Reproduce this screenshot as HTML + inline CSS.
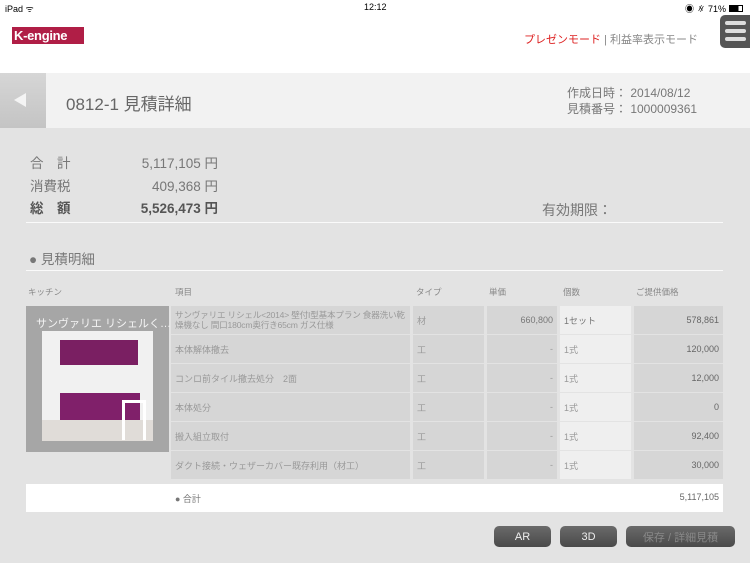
<!DOCTYPE html>
<html><head><meta charset="utf-8"><style>
*{margin:0;padding:0;box-sizing:border-box}
body{width:750px;height:563px;background:#e3e3e3;font-family:"Liberation Sans","Noto Sans CJK JP",sans-serif;position:relative;overflow:hidden;color:#666}
.a{position:absolute;white-space:nowrap}
.top{position:absolute;left:0;top:0;width:750px;height:73px;background:#fff}
.hd{position:absolute;left:0;top:73px;width:750px;height:55px;background:#f2f2f2}
.back{position:absolute;left:0;top:73px;width:46px;height:55px;background:linear-gradient(#d6d6d6,#c4c4c4)}
.c{position:absolute;background:#d6d6d6;font-size:9px;color:#999;padding:0 4px;display:flex;align-items:center}
.q{background:#efefef}
.btn{position:absolute;top:526px;height:21px;border-radius:5px;background:linear-gradient(#6a6a6a,#4a4a4a);color:#eee;font-size:11px;display:flex;align-items:center;justify-content:center}
</style></head><body>
<div class="top"></div>
<div class="a" style="left:5px;top:2px;font-size:9px;color:#000">iPad ᯤ</div>
<div class="a" style="left:364px;top:2px;font-size:9px;color:#000">12:12</div>
<div class="a" style="left:685px;top:2px;font-size:9px;color:#000">◉ ∦ 71% <span style="display:inline-block;width:14px;height:7px;border:1px solid #000;background:linear-gradient(90deg,#000 70%,#fff 70%)"></span></div>
<div class="a" style="left:12px;top:27px;width:72px;height:17px;background:#b01e46;color:#fff;font-size:13px;font-weight:bold;line-height:17px;padding-left:2px;letter-spacing:-0.3px">K-engine</div>
<div class="a" style="left:524px;top:31px;font-size:11px;color:#d22"><span>プレゼンモード</span> <span style="color:#888">| 利益率表示モード</span></div>
<div class="a" style="left:720px;top:15px;width:30px;height:33px;background:#555;border-radius:5px 0 0 5px"></div>
<div class="a" style="left:725px;top:21px;width:21px;height:4px;background:#ddd;border-radius:2px;box-shadow:0 8px 0 #ddd,0 16px 0 #ddd"></div>
<div class="hd"></div><div class="back"></div>
<div class="a" style="left:14px;top:93px;width:0;height:0;border-top:7px solid transparent;border-bottom:7px solid transparent;border-right:12px solid #f4f4f4"></div>
<div class="a" style="left:66px;top:90px;font-size:17px;color:#666">0812-1 見積詳細</div>
<div class="a" style="left:567px;top:85px;font-size:12px;color:#777;line-height:16px">作成日時： 2014/08/12<br>見積番号： 1000009361</div>
<div class="a" style="left:30px;top:153px;font-size:13.5px;line-height:22.5px;color:#777">合　計<br>消費税<br><b style="color:#555">総　額</b></div>
<div class="a" style="left:100px;top:153px;width:118px;text-align:right;font-size:13.5px;line-height:22.5px;color:#777">5,117,105 円<br>409,368 円<br><b style="color:#555">5,526,473 円</b></div>
<div class="a" style="left:542px;top:200px;font-size:14px;color:#777">有効期限：</div>
<div class="a" style="left:26px;top:222px;width:697px;height:1px;background:#fafafa"></div>
<div class="a" style="left:29px;top:248px;font-size:13.5px;color:#777">● 見積明細</div>
<div class="a" style="left:26px;top:270px;width:697px;height:1px;background:#fafafa"></div>
<div class="a" style="top:286px;font-size:8.5px;color:#888;left:28px">キッチン</div>
<div class="a" style="top:286px;font-size:8.5px;color:#888;left:175px">項目</div>
<div class="a" style="top:286px;font-size:8.5px;color:#888;left:416px">タイプ</div>
<div class="a" style="top:286px;font-size:8.5px;color:#888;left:489px">単価</div>
<div class="a" style="top:286px;font-size:8.5px;color:#888;left:563px">個数</div>
<div class="a" style="top:286px;font-size:8.5px;color:#888;left:636px">ご提供価格</div>
<div class="a" style="left:26px;top:306px;width:143px;height:146px;background:#a6a6a6"></div>
<div class="a" style="left:36px;top:315px;font-size:11px;color:#f4f4f4">サンヴァリエ リシェルく…</div>
<div class="a" style="left:42px;top:331px;width:111px;height:110px;background:#f1f1f1"></div>
<div class="a" style="left:60px;top:340px;width:78px;height:25px;background:#7a1f62"></div>
<div class="a" style="left:60px;top:393px;width:80px;height:27px;background:#80206a"></div>
<div class="a" style="left:42px;top:420px;width:111px;height:21px;background:#e0dcd8"></div>
<div class="a" style="left:122px;top:400px;width:24px;height:40px;border:3px solid #fff;border-bottom:none;background:transparent"></div>
<div class="c" style="left:171px;top:306px;width:239px;height:28px;line-height:10px;white-space:normal;font-size:8.6px;letter-spacing:-0.2px">サンヴァリエ リシェル&lt;2014&gt; 壁付I型基本プラン 食器洗い乾燥機なし 間口180cm奥行き65cm ガス仕様</div>
<div class="c" style="left:171px;top:335px;width:239px;height:28px">本体解体撤去</div>
<div class="c" style="left:171px;top:364px;width:239px;height:28px">コンロ前タイル撤去処分　2面</div>
<div class="c" style="left:171px;top:393px;width:239px;height:28px">本体処分</div>
<div class="c" style="left:171px;top:422px;width:239px;height:28px">搬入組立取付</div>
<div class="c" style="left:171px;top:451px;width:239px;height:28px">ダクト接続・ウェザーカバー既存利用（材工）</div>
<div class="c" style="left:413px;top:306px;width:71px;height:28px">材</div>
<div class="c" style="left:413px;top:335px;width:71px;height:28px">工</div>
<div class="c" style="left:413px;top:364px;width:71px;height:28px">工</div>
<div class="c" style="left:413px;top:393px;width:71px;height:28px">工</div>
<div class="c" style="left:413px;top:422px;width:71px;height:28px">工</div>
<div class="c" style="left:413px;top:451px;width:71px;height:28px">工</div>
<div class="c" style="left:487px;top:306px;width:70px;height:28px;justify-content:flex-end;color:#777">660,800</div>
<div class="c" style="left:487px;top:335px;width:70px;height:28px;justify-content:flex-end">-</div>
<div class="c" style="left:487px;top:364px;width:70px;height:28px;justify-content:flex-end">-</div>
<div class="c" style="left:487px;top:393px;width:70px;height:28px;justify-content:flex-end">-</div>
<div class="c" style="left:487px;top:422px;width:70px;height:28px;justify-content:flex-end">-</div>
<div class="c" style="left:487px;top:451px;width:70px;height:28px;justify-content:flex-end">-</div>
<div class="c q" style="left:560px;top:306px;width:71px;height:28px;color:#777">1セット</div>
<div class="c q" style="left:560px;top:335px;width:71px;height:28px">1式</div>
<div class="c q" style="left:560px;top:364px;width:71px;height:28px">1式</div>
<div class="c q" style="left:560px;top:393px;width:71px;height:28px">1式</div>
<div class="c q" style="left:560px;top:422px;width:71px;height:28px">1式</div>
<div class="c q" style="left:560px;top:451px;width:71px;height:28px">1式</div>
<div class="c" style="left:634px;top:306px;width:89px;height:28px;justify-content:flex-end;color:#666">578,861</div>
<div class="c" style="left:634px;top:335px;width:89px;height:28px;justify-content:flex-end;color:#666">120,000</div>
<div class="c" style="left:634px;top:364px;width:89px;height:28px;justify-content:flex-end;color:#666">12,000</div>
<div class="c" style="left:634px;top:393px;width:89px;height:28px;justify-content:flex-end;color:#666">0</div>
<div class="c" style="left:634px;top:422px;width:89px;height:28px;justify-content:flex-end;color:#666">92,400</div>
<div class="c" style="left:634px;top:451px;width:89px;height:28px;justify-content:flex-end;color:#666">30,000</div>
<div class="a" style="left:26px;top:484px;width:697px;height:28px;background:#fff"></div>
<div class="a" style="left:175px;top:492px;font-size:9px;color:#777">● 合計</div>
<div class="a" style="left:634px;top:492px;width:85px;text-align:right;font-size:9px;color:#666">5,117,105</div>
<div class="btn" style="left:494px;width:57px">AR</div>
<div class="btn" style="left:560px;width:57px">3D</div>
<div class="btn" style="left:626px;width:109px;color:#888">保存 / 詳細見積</div>
</body></html>
